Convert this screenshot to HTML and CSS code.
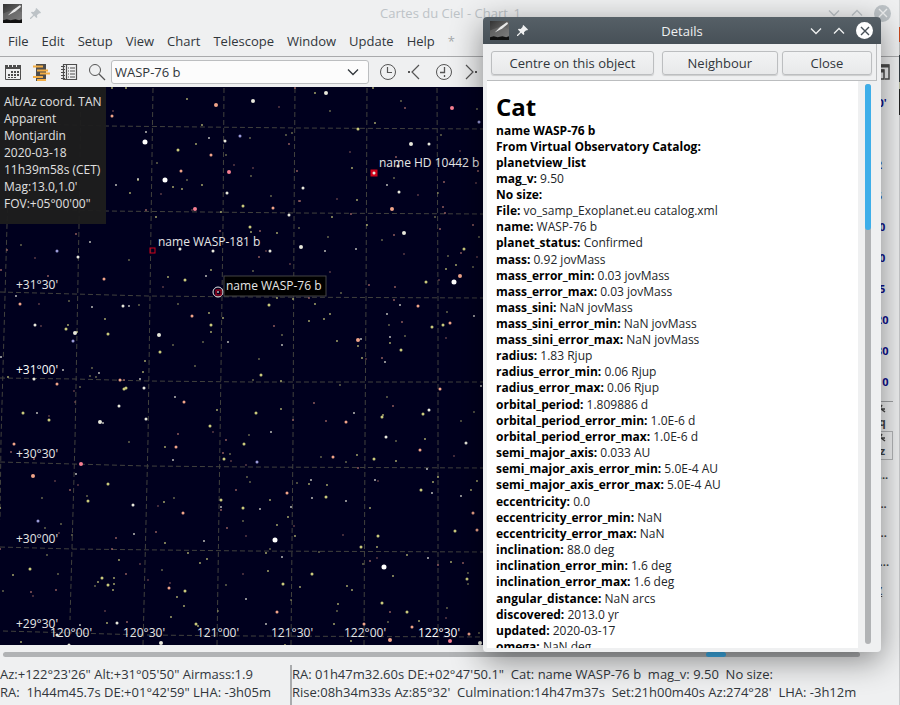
FILE: index.html
```
<!DOCTYPE html>
<html lang="en">

<head>
  <meta charset="UTF-8">
  <meta name="viewport" content="width=device-width, initial-scale=1.0">
  <title>Cartes du Ciel - Chart_1</title>
  <link rel="stylesheet" href="styles.css">
</head>

<body>
  <!-- Shared symbols -->
  <svg class="symbols" aria-hidden="true">
    <defs>
      <linearGradient id="sky" x1="0" y1="0" x2="1" y2="1">
        <stop offset="0" stop-color="#333" />
        <stop offset="1" stop-color="#858585" />
      </linearGradient>
      <symbol id="comet" viewBox="0 0 20 20">
        <rect width="20" height="20" fill="url(#sky)" />
        <path d="M0 10L13 5 20 9V20H0z" fill="#777" opacity=".5" />
        <path d="M5 12L11 6 18 1 19 3 13 8z" fill="#e8e8e8" />
        <path d="M0 20V17l4-1 4 1 5-1 4 1 3-1v4z" fill="#111" />
      </symbol>
      <symbol id="pin" viewBox="0 0 12 12">
        <path d="M7 0l5 5-1 1-1-.3L7.600 8 8 10 7 11 4.500 8.500 1 12 0 12 0 11 3.500 7.500 1 5 2 4 4 4.400 6.300 2 6 1z" fill="currentColor" />
      </symbol>
      <symbol id="down" viewBox="0 0 12 12">
        <path d="M1 3.500l5 5 5-5" fill="none" stroke="currentColor" stroke-width="1.300" />
      </symbol>
      <symbol id="up" viewBox="0 0 12 12">
        <path d="M1 8.500l5-5 5 5" fill="none" stroke="currentColor" stroke-width="1.300" />
      </symbol>
      <symbol id="axes" viewBox="0 0 16 10">
        <path d="M3 5h11M11 1L6 9M10 5l4 3" fill="none" stroke="currentColor" stroke-width="1.500" />
      </symbol>
    </defs>
  </svg>

  <div class="main-window">
    <header class="titlebar">
      <svg class="app-icon"><use href="#comet" /></svg>
      <svg class="pin"><use href="#pin" /></svg>
      <h1>Cartes du Ciel - Chart_1</h1>
      <div class="window-buttons">
        <button aria-label="Minimize"><svg><use href="#down" /></svg></button>
        <button aria-label="Maximize"><svg><use href="#up" /></svg></button>
        <button class="close" aria-label="Close window">
          <svg viewBox="0 0 12 12"><path d="M2 2l8 8M10 2l-8 8" stroke="currentColor" stroke-width="1.400" /></svg>
        </button>
      </div>
    </header>

    <nav class="menubar">
      <button>File</button>
      <button>Edit</button>
      <button>Setup</button>
      <button>View</button>
      <button>Chart</button>
      <button>Telescope</button>
      <button>Window</button>
      <button>Update</button>
      <button>Help</button>
      <span class="menu-star">*</span>
    </nav>

    <div class="toolbar">
      <button aria-label="Calendar">
        <svg viewBox="0 0 18 18">
          <path d="M1.500 3v13.500h15V3" fill="none" stroke="#4d4d4d" />
          <path d="M1 2h3v2h1V2h3v2h1V2h3v2h1V2h4v4H1z" fill="#4d4d4d" />
          <path d="M7 8h2v2H7zM10 8h2v2h-2zM13 8h2v2h-2zM4 11h2v2H4zM7 11h2v2H7zM10 11h2v2h-2zM13 11h2v2h-2zM4 14h2v1H4zM7 14h2v1H7zM10 14h2v1h-2z" fill="#4d4d4d" />
        </svg>
      </button>
      <button aria-label="Objects list">
        <svg viewBox="0 0 18 18">
          <path d="M4 1h10v17H4z" fill="#4d4d4d" />
          <path d="M1 3.500h10M5 7.500h11M8 10.500h10M1 14h10M5 17h9" stroke="#f3ae45" stroke-width="2" />
        </svg>
      </button>
      <button aria-label="Observing list">
        <svg viewBox="0 0 18 18">
          <path d="M3.500 1.500h13v15h-13zM6.500 1v16" fill="none" stroke="#4d4d4d" stroke-width="1.200" />
          <path d="M1 3.500h4M1 6.500h4M1 9.500h4M1 12.500h4M1 15.500h4" stroke="#4d4d4d" />
          <path d="M8 5h1M10 5h5M8 8h1M10 8h5M8 11h1M10 11h5M8 14h1M10 14h5" stroke="#4d4d4d" />
        </svg>
      </button>
      <button class="search-button" aria-label="Search">
        <svg viewBox="0 0 18 18">
          <circle cx="7" cy="7" r="5.500" fill="none" stroke="#555" />
          <path d="M11 11l6 6" stroke="#555" stroke-width="1.200" />
        </svg>
      </button>
      <div class="combo">
        <input type="text" value="WASP-76 b" aria-label="Object name">
        <button aria-label="Show recent searches"><svg><use href="#down" /></svg></button>
      </div>
      <button aria-label="Now">
        <svg viewBox="0 0 18 18">
          <circle cx="9" cy="9" r="7.500" fill="none" stroke="#555" />
          <path d="M8.500 4v5.500H13" fill="none" stroke="#555" stroke-width="1.200" />
        </svg>
      </button>
      <button aria-label="Step back">
        <svg viewBox="0 0 18 18">
          <path d="M12 2L5 9l7 7" fill="none" stroke="#555" stroke-width="1.200" />
          <path d="M1 8h2v2H1z" fill="#555" />
        </svg>
      </button>
      <button aria-label="Set time step">
        <svg viewBox="0 0 18 18">
          <circle cx="9" cy="9" r="7.500" fill="none" stroke="#555" />
          <path d="M9.500 4v5.500H5M9.500 12v2" fill="none" stroke="#555" stroke-width="1.300" />
        </svg>
      </button>
      <button aria-label="Step forward">
        <svg viewBox="0 0 18 18">
          <path d="M3 2l7 7-7 7" fill="none" stroke="#555" stroke-width="1.200" />
          <path d="M12 8h2v2h-2z" fill="#555" />
        </svg>
      </button>
      <button class="last-tool" aria-label="Cascade">
        <svg viewBox="0 0 18 18">
          <path d="M2 2h15v14h-4" fill="none" stroke="#4d4d4d" stroke-width="1.500" />
          <path d="M2 3h15M2 8h10" stroke="#4d4d4d" stroke-width="3" />
          <path d="M2 7h10v9H2z" fill="none" stroke="#4d4d4d" stroke-width="1.500" />
        </svg>
      </button>
    </div>

    <main class="workspace">
      <div class="chart">
        <svg class="sky-map" role="img" aria-label="Star chart">
          <g transform="translate(0 -87)">
            <!-- Coordinate grid -->
            <g class="grid">
              <path d="M12 88L7 225 1 440 0 520" />
              <path d="M81 88L79 225 75 440 70 620" />
              <path d="M153 88L151 225 148 440 143 645" />
              <path d="M224 88L223 225 220 440 217 645" />
              <path d="M295 88L294 225 293 440 291 645" />
              <path d="M367 88L366 300 365 440 364 645" />
              <path d="M437 88L438 300 438 645" />
              <path d="M0 123L106 126 300 128 484 129" />
              <path d="M0 208L106 211 300 213 484 214" />
              <path d="M0 292L148 296 250 297 484 298" />
              <path d="M0 378L75 379 148 381 250 382 484 382" />
              <path d="M0 462L73 464 147 466 250 467 484 468" />
              <path d="M0 547L73 549 250 551 484 552" />
              <path d="M3 631L145 635 250 636 484 637" />
            </g>

            <!-- Stars, grouped by tint and magnitude -->
            <path class="star yellow faint" d="M292 133h0M286 135h0M250 138h0M226 155h0M157 163h0M187 180h0M251 176h0M271 196h0M401 101h0M330 111h0M441 135h0M477 109h0M394 178h0M438 193h0M435 217h0M299 228h0M21 245h0M129 260h0M139 305h0M69 301h0M92 368h0M90 376h0M96 377h0M80 387h0M178 304h0M203 342h0M195 366h0M173 345h0M328 237h0M382 240h0M448 256h0M473 267h0M479 237h0M253 271h0M341 293h0M282 335h0M389 325h0M405 336h0M447 312h0M259 359h0M253 380h0M340 385h0M387 397h0M461 421h0M474 412h0M249 435h0M129 442h0M230 454h0M87 496h0M42 498h0M61 524h0M45 528h0M72 535h0M174 498h0M47 555h0M58 574h0M95 586h0M3 591h0M162 570h0M226 585h0M218 611h0M247 477h0M243 521h0M396 441h0M321 457h0M346 462h0M297 483h0M250 482h0M270 549h0M319 552h0M363 564h0M468 573h0M468 584h0M291 600h0M337 611h0M447 608h0M388 622h0M479 633h0" />
            <path class="star yellow small" d="M112 88h0M126 88h0M187 99h0M202 125h0M196 144h0M138 180h0M173 187h0M182 189h0M202 185h0M130 193h0M156 217h0M221 212h0M251 232h0M277 233h0M315 93h0M373 88h0M375 123h0M352 168h0M357 200h0M367 225h0M332 217h0M168 277h0M211 270h0M105 319h0M68 325h0M77 332h0M145 361h0M143 372h0M8 377h0M217 410h0M209 313h0M211 332h0M223 318h0M456 265h0M446 269h0M277 298h0M293 299h0M315 304h0M330 314h0M324 319h0M309 321h0M337 341h0M358 346h0M362 358h0M390 343h0M281 381h0M281 409h0M383 415h0M425 439h0M165 447h0M0 508h0M164 502h0M165 543h0M188 553h0M207 559h0M200 563h0M119 560h0M13 575h0M114 578h0M114 584h0M98 582h0M113 590h0M177 597h0M184 606h0M171 617h0M198 626h0M107 623h0M21 642h0M357 455h0M396 461h0M477 481h0M433 482h0M438 477h0M471 490h0M309 484h0M327 485h0M270 500h0M288 517h0M277 525h0M295 536h0M370 508h0M377 547h0M266 553h0M407 555h0M451 562h0M393 576h0M268 571h0M300 587h0M347 586h0M352 590h0M338 604h0M419 621h0M334 624h0M351 641h0M285 645h0" />
            <path class="star yellow medium" d="M178 150h0M243 206h0M250 227h0M358 129h0M185 280h0M66 329h0M108 334h0M160 352h0M124 389h0M126 388h0M23 413h0M49 420h0M210 426h0M211 325h0M464 249h0M426 282h0M269 305h0M401 350h0M432 327h0M443 325h0M261 375h0M256 413h0M382 417h0M423 414h0M244 444h0M224 459h0M108 484h0M88 501h0M221 500h0M243 508h0M30 569h0M102 578h0M108 585h0M185 591h0M196 624h0M374 459h0M421 490h0M326 497h0M378 536h0M455 531h0M361 547h0M467 579h0M312 574h0M283 584h0M382 603h0M407 612h0" />
            <path class="star red faint" d="M279 107h0M113 111h0M192 210h0M161 194h0M234 165h0M253 168h0M350 152h0M460 151h0M418 195h0M337 199h0M476 183h0M35 258h0M163 287h0M39 304h0M41 326h0M74 391h0M75 402h0M49 416h0M213 432h0M290 264h0M330 272h0M404 254h0M477 257h0M439 280h0M446 338h0M366 359h0M231 461h0M55 481h0M78 485h0M158 506h0M246 536h0M59 533h0M140 564h0M33 596h0M148 580h0M170 583h0M243 574h0M105 611h0M454 456h0M246 465h0M378 481h0M294 526h0M343 535h0M377 558h0M446 618h0M266 251h0" />
            <path class="star red small" d="M146 210h0M289 144h0M297 171h0M299 201h0M220 231h0M260 231h0M76 234h0M295 88h0M405 108h0M396 157h0M444 182h0M300 201h0M351 214h0M443 207h0M445 213h0M478 171h0M473 225h0M440 229h0M7 250h0M1 270h0M48 276h0M124 380h0M178 434h0M226 440h0M259 257h0M394 235h0M461 253h0M369 285h0M395 287h0M394 300h0M274 326h0M402 322h0M382 358h0M393 406h0M314 403h0M326 421h0M293 420h0M309 298h0M11 452h0M70 490h0M34 459h0M223 453h0M236 490h0M156 532h0M221 510h0M227 528h0M116 538h0M112 549h0M0 549h0M126 574h0M31 592h0M56 590h0M127 622h0M358 468h0M438 565h0M463 563h0M370 561h0M390 612h0" />
            <path class="star orange medium" d="M112 116h0M211 155h0M181 171h0M273 208h0M104 279h0M192 316h0M57 384h0M184 402h0M418 306h0M450 323h0M440 389h0M346 422h0M14 444h0M176 447h0M183 513h0M169 588h0M333 457h0M420 450h0M287 493h0M473 513h0M477 530h0M277 612h0M364 624h0M412 627h0M469 634h0M20 304h0M120 380h0" />
            <path class="star orange bright" d="M216 105h0M392 209h0M460 276h0M358 340h0M33 476h0M390 640h0" />
            <path class="star pink bright" d="M229 172h0M195 209h0M452 108h0M81 464h0M450 641h0" />
            <path class="star white small" d="M146 132h0M209 138h0M225 141h0M116 185h0M138 179h0M387 185h0M90 242h0M206 276h0M16 296h0M92 307h0M129 306h0M228 342h0M63 370h0M99 373h0M103 423h0M37 413h0M175 397h0M140 379h0M1 357h0M325 251h0M356 249h0M474 316h0M400 305h0M387 314h0M390 337h0M385 362h0M361 339h0M282 345h0M354 413h0M271 432h0M481 386h0M173 460h0M76 474h0M134 534h0M204 541h0M221 507h0M246 599h0M80 625h0M311 480h0M346 501h0M312 498h0M432 493h0M461 496h0M427 469h0M375 480h0M260 509h0M291 507h0M428 558h0M282 557h0M266 624h0" />
            <path class="star white medium" d="M227 193h0M289 215h0M303 188h0M399 192h0M429 144h0M78 257h0M180 249h0M213 251h0M123 306h0M35 325h0M34 379h0M144 388h0M119 406h0M146 419h0M270 251h0M429 410h0M386 437h0M133 505h0M117 623h0M57 635h0M69 645h0M466 443h0M225 141h0M398 166h0" />
            <path class="star blue medium" d="M240 136h0M479 122h0M57 251h0M73 341h0M38 521h0M257 462h0" />
            <path class="star white bright" d="M253 101h0M326 93h0M411 144h0M301 247h0M404 233h0M159 335h0M75 333h0M100 422h0M161 643h0M480 643h0" />
            <path class="star white brightest" d="M145 142h0M165 180h0M454 282h0M275 540h0M384 567h0" />

            <!-- Catalog objects -->
            <rect class="marker filled" x="371" y="170" width="6" height="6" />
            <path class="star white medium" d="M374 173h0" />
            <rect class="marker" x="150" y="248" width="5" height="5" />
            <circle class="cursor-ring" cx="218" cy="292" r="5" />
            <rect class="marker" x="216" y="290" width="5" height="5" />
            <path class="star white small" d="M218 292h0" />

            <g class="labels">
              <text x="379" y="167">name HD 10442 b</text>
              <text x="158" y="246">name WASP-181 b</text>
              <text x="16" y="289">+31°30'</text>
              <text x="16" y="374" class="strong">+31°00'</text>
              <text x="16" y="458">+30°30'</text>
              <text x="16" y="543">+30°00'</text>
              <text x="16" y="628">+29°30'</text>
              <text x="50" y="637">120°00'</text>
              <text x="123" y="637">120°30'</text>
              <text x="197" y="637">121°00'</text>
              <text x="271" y="637">121°30'</text>
              <text x="344" y="637">122°00'</text>
              <text x="418" y="637" class="strong">122°30'</text>
            </g>
            <rect class="label-box" x="224" y="276" width="102" height="20" />
            <text class="boxed-label" x="226" y="290">name WASP-76 b</text>
          </g>
        </svg>

        <ul class="chart-info">
          <li>Alt/Az coord. TAN</li>
          <li>Apparent</li>
          <li>Montjardin</li>
          <li>2020-03-18</li>
          <li>11h39m58s (CET)</li>
          <li>Mag:13.0,1.0'</li>
          <li>FOV:+05°00'00"</li>
        </ul>
      </div>

      <div class="side-toolbar">
        <button>30'</button>
        <button>1</button>
        <button>2</button>
        <button>5</button>
        <button>10</button>
        <button>20</button>
        <button>45</button>
        <button>120</button>
        <button>180</button>
        <button>310</button>
        <hr>
        <button class="dark"><svg><use href="#axes" /></svg>eq</button>
        <button class="dark pressed"><svg><use href="#axes" /></svg>az</button>
        <button class="dark">N...</button>
        <button class="dark">S...</button>
        <button class="dark">E...</button>
        <button class="dark">W...</button>
        <button class="dark"><u>Z</u></button>
      </div>
    </main>

    <div class="h-scroll"><span class="h-thumb"></span></div>

    <footer class="statusbar">
      <p>Az:+122°23'26" Alt:+31°05'50" Airmass:1.9<br>RA:&nbsp; 1h44m45.7s DE:+01°42'59" LHA: -3h05m</p>
      <p>RA: 01h47m32.60s DE:+02°47'50.1"&nbsp; Cat: name WASP-76 b&nbsp; mag_v: 9.50&nbsp; No size:<br>Rise:08h34m33s Az:85°32'&nbsp; Culmination:14h47m37s&nbsp; Set:21h00m40s Az:274°28'&nbsp; LHA: -3h12m</p>
    </footer>
  </div>

  <section class="dialog" role="dialog" aria-labelledby="dialog-title">
    <header class="titlebar">
      <svg class="app-icon"><use href="#comet" /></svg>
      <svg class="pin"><use href="#pin" /></svg>
      <h2 id="dialog-title">Details</h2>
      <div class="window-buttons">
        <button aria-label="Minimize"><svg><use href="#down" /></svg></button>
        <button aria-label="Maximize"><svg><use href="#up" /></svg></button>
        <button class="close" aria-label="Close window">
          <svg viewBox="0 0 12 12"><path d="M2 2l8 8M10 2l-8 8" stroke="currentColor" stroke-width="1.400" /></svg>
        </button>
      </div>
    </header>

    <div class="dialog-actions">
      <button class="centre">Centre on this object</button>
      <button class="neighbour">Neighbour</button>
      <button class="done">Close</button>
    </div>

    <div class="dialog-body">
      <article class="details">
        <h3>Cat</h3>
        <ul>
          <li><b>name WASP-76 b</b></li>
          <li><b>From Virtual Observatory Catalog:</b></li>
          <li><b>planetview_list</b></li>
          <li><b>mag_v:</b> 9.50</li>
          <li><b>No size:</b></li>
          <li><b>File:</b> vo_samp_Exoplanet.eu catalog.xml</li>
          <li><b>name:</b> WASP-76 b</li>
          <li><b>planet_status:</b> Confirmed</li>
        </ul>
        <ul>
          <li><b>mass:</b> 0.92 jovMass</li>
          <li><b>mass_error_min:</b> 0.03 jovMass</li>
          <li><b>mass_error_max:</b> 0.03 jovMass</li>
          <li><b>mass_sini:</b> NaN jovMass</li>
          <li><b>mass_sini_error_min:</b> NaN jovMass</li>
          <li><b>mass_sini_error_max:</b> NaN jovMass</li>
          <li><b>radius:</b> 1.83 Rjup</li>
          <li><b>radius_error_min:</b> 0.06 Rjup</li>
          <li><b>radius_error_max:</b> 0.06 Rjup</li>
        </ul>
        <ul>
          <li><b>orbital_period:</b> 1.809886 d</li>
          <li><b>orbital_period_error_min:</b> 1.0E-6 d</li>
          <li><b>orbital_period_error_max:</b> 1.0E-6 d</li>
          <li><b>semi_major_axis:</b> 0.033 AU</li>
          <li><b>semi_major_axis_error_min:</b> 5.0E-4 AU</li>
          <li><b>semi_major_axis_error_max:</b> 5.0E-4 AU</li>
        </ul>
        <ul>
          <li><b>eccentricity:</b> 0.0</li>
          <li><b>eccentricity_error_min:</b> NaN</li>
          <li><b>eccentricity_error_max:</b> NaN</li>
          <li><b>inclination:</b> 88.0 deg</li>
          <li><b>inclination_error_min:</b> 1.6 deg</li>
          <li><b>inclination_error_max:</b> 1.6 deg</li>
        </ul>
        <ul>
          <li><b>angular_distance:</b> NaN arcs</li>
          <li><b>discovered:</b> 2013.0 yr</li>
          <li><b>updated:</b> 2020-03-17</li>
          <li><b>omega:</b> NaN deg</li>
        </ul>
      </article>
      <div class="v-scroll"><span class="v-thumb"></span></div>
    </div>
  </section>
</body>

</html>
```
FILE: styles.css
```
*,
*::before,
*::after {
  box-sizing: border-box;
}

body {
  position: relative;
  height: 100vh;
  margin: 0;
  overflow: hidden;
  font-family: 'Open Sans', 'Noto Sans', sans-serif;
  font-size: 13px;
  color: #31363b;
  background: linear-gradient(#d5d6d7 27px, #c8471c 27px, #c8471c 42px, #bbb 42px, #bbb 55px, #333a40 55px, #333a40 82px, #b9bba0 82px, #b9bba0 89px, #222 89px, #222 115px, #c9cacc 115px);
}

button,
input {
  font: inherit;
  color: inherit;
}

button {
  display: flex;
  justify-content: center;
  align-items: center;
  padding: 0;
  border: none;
  background: none;
}

h1,
h2,
h3,
p,
ul {
  margin: 0;
  padding: 0;
  list-style: none;
}

.symbols {
  position: absolute;
  width: 0;
  height: 0;
}

.main-window {
  display: flex;
  flex-direction: column;
  height: 100%;
  margin-right: 1px;
  background: #eff0f1;
}

/* Title bars */

.titlebar {
  display: flex;
  align-items: center;
  flex: none;
  height: 26px;
  padding: 0 8px 0 3px;
  color: #bdc3c7;
}

.titlebar h1,
.titlebar h2 {
  flex: 1;
  font-size: 13px;
  font-weight: 400;
  text-align: center;
}

.titlebar h1 {
  padding-left: 32px;
}

.titlebar h2 {
  padding-left: 26px;
}

.app-icon {
  width: 19px;
  height: 19px;
}

.pin {
  width: 11px;
  height: 11px;
  margin-left: 8px;
}

.window-buttons {
  display: flex;
  align-items: center;
  gap: 11px;
}

.window-buttons svg {
  width: 12px;
  height: 12px;
}

.window-buttons .close {
  width: 17px;
  height: 17px;
  border-radius: 50%;
  color: #eff0f1;
  background: #bdc3c7;
}

/* Menu and toolbar */

.menubar {
  display: flex;
  align-items: center;
  flex: none;
  gap: 13px;
  height: 31px;
  padding: 0 8px;
  border-bottom: 1px solid #a9aaac;
}

.menu-star {
  color: #a5a8aa;
}

.toolbar {
  display: flex;
  align-items: center;
  flex: none;
  gap: 10px;
  height: 30px;
  padding: 0 9px 0 4px;
}

.toolbar > button svg {
  width: 18px;
  height: 18px;
}

.search-button {
  margin-right: -5px;
}

.last-tool {
  margin-left: auto;
}

.combo {
  display: flex;
  width: 258px;
  height: 24px;
  border: 1px solid #bcbec0;
  border-radius: 3px;
  background: #fcfcfc;
}

.combo input {
  flex: 1;
  min-width: 0;
  padding: 0 3px;
  border: none;
  background: none;
  outline: none;
}

.combo button {
  width: 30px;
}

.combo svg {
  width: 12px;
  height: 12px;
}

/* Chart */

.workspace {
  display: flex;
  flex: 1;
  min-height: 0;
}

.chart {
  position: relative;
  flex: 1;
  background: #00001e;
}

.sky-map {
  display: block;
  width: 100%;
  height: 100%;
}

.grid {
  fill: none;
  stroke: #41413d;
  stroke-dasharray: 5 3;
}

.star {
  fill: none;
  stroke-linecap: round;
}

.yellow {
  stroke: #c9c97c;
}

.red {
  stroke: #b0716b;
}

.orange {
  stroke: #f0a489;
}

.pink {
  stroke: #f77f92;
}

.white {
  stroke: #e8e8dc;
}

.blue {
  stroke: #9a9ad8;
}

.faint {
  stroke-width: 2px;
  opacity: 0.5;
}

.small {
  stroke-width: 2px;
  opacity: 0.8;
}

.medium {
  stroke-width: 3px;
}

.bright {
  stroke-width: 4px;
}

.brightest {
  stroke: #fff;
  stroke-width: 5px;
}

.marker {
  fill: none;
  stroke: #d0021b;
}

.marker.filled {
  fill: #d0021b;
}

.cursor-ring {
  fill: none;
  stroke: #e6e6e6;
}

.labels text,
.boxed-label {
  font-size: 12px;
  fill: #e6e6e6;
}

.labels .strong {
  fill: #fff;
}

.label-box {
  fill: #000;
  stroke: #444;
}

.chart-info {
  position: absolute;
  top: 0;
  left: 0;
  width: 106px;
  height: 137px;
  padding: 6px 4px;
  font-size: 12px;
  line-height: 17px;
  white-space: nowrap;
  color: #e0e0e0;
  background: rgba(30, 30, 30, 0.95);
}

.side-toolbar {
  display: flex;
  flex-direction: column;
  width: 40px;
  font-size: 11px;
  font-weight: 700;
  color: #10108c;
}

.side-toolbar button {
  flex: none;
  height: 31px;
}

.side-toolbar hr {
  width: 28px;
  margin: 4px auto 0;
  border: none;
  border-top: 1px solid #a0a2a4;
}

.side-toolbar .dark {
  flex-direction: column;
  align-self: center;
  width: 28px;
  height: 29px;
  line-height: 15px;
  color: #444;
}

.side-toolbar svg {
  width: 16px;
  height: 10px;
}

.side-toolbar .pressed {
  border: 1px solid #b4b6b8;
}

.h-scroll {
  flex: none;
  height: 5px;
  margin: 7px 39px 0 3px;
  border-radius: 3px;
  background: #b1b3b5;
}

.h-thumb {
  display: block;
  width: 20px;
  height: 5px;
  margin-left: 82%;
  border-radius: 3px;
  background: #3daee9;
}

.statusbar {
  display: flex;
  flex: none;
  height: 48px;
  padding-top: 8px;
  line-height: 18px;
  white-space: nowrap;
}

.statusbar p:first-child {
  width: 290px;
}

.statusbar p:last-child {
  flex: 1;
  height: 40px;
  border-left: 2px solid #a9abad;
}

/* Details dialog */

.dialog {
  display: flex;
  flex-direction: column;
  position: absolute;
  top: 17px;
  right: 19px;
  bottom: 53px;
  width: 398px;
  border-radius: 4px;
  background: #eff0f1;
  box-shadow: 0 8px 32px rgba(0, 0, 0, 0.45);
}

.dialog .titlebar {
  height: 27px;
  padding: 0 8px 0 7px;
  border-radius: 4px 4px 0 0;
  color: #eff0f1;
  background: linear-gradient(#566067, #475057);
}

.dialog .close {
  color: #475057;
  background: #fff;
}

.dialog-actions {
  display: flex;
  flex: none;
  height: 37px;
  margin: 0 4px;
  padding: 7px 4px;
  border-right: 1px solid #bbbdbf;
  border-bottom: 1px solid #bbbdbf;
}

.dialog-actions button {
  height: 24px;
  border: 1px solid #bcbec0;
  border-radius: 3px;
  background: linear-gradient(#f2f3f4, #e8e9ea);
  box-shadow: 0 1px 1px rgba(0, 0, 0, 0.15);
}

.centre {
  flex: 164;
  margin-right: 8px;
}

.neighbour {
  flex: 116;
  margin-right: 4px;
}

.done {
  flex: 90;
}

.dialog-body {
  display: flex;
  flex: 1;
  min-height: 0;
  padding: 0 10px 4px 4px;
}

.details {
  flex: 1;
  padding: 9px;
  overflow: hidden;
  font-size: 12px;
  line-height: 16px;
  color: #232629;
  background: #fff;
}

.details h3 {
  font-size: 24px;
  line-height: 33px;
  color: #000;
}

.details ul {
  margin-bottom: 1px;
}

.details b {
  color: #000;
}

.v-scroll {
  width: 6px;
  margin: 3px 0 4px 7px;
  border-radius: 3px;
  background: #b1b3b5;
}

.v-thumb {
  display: block;
  height: 26%;
  border-radius: 3px;
  background: #3daee9;
}
```
